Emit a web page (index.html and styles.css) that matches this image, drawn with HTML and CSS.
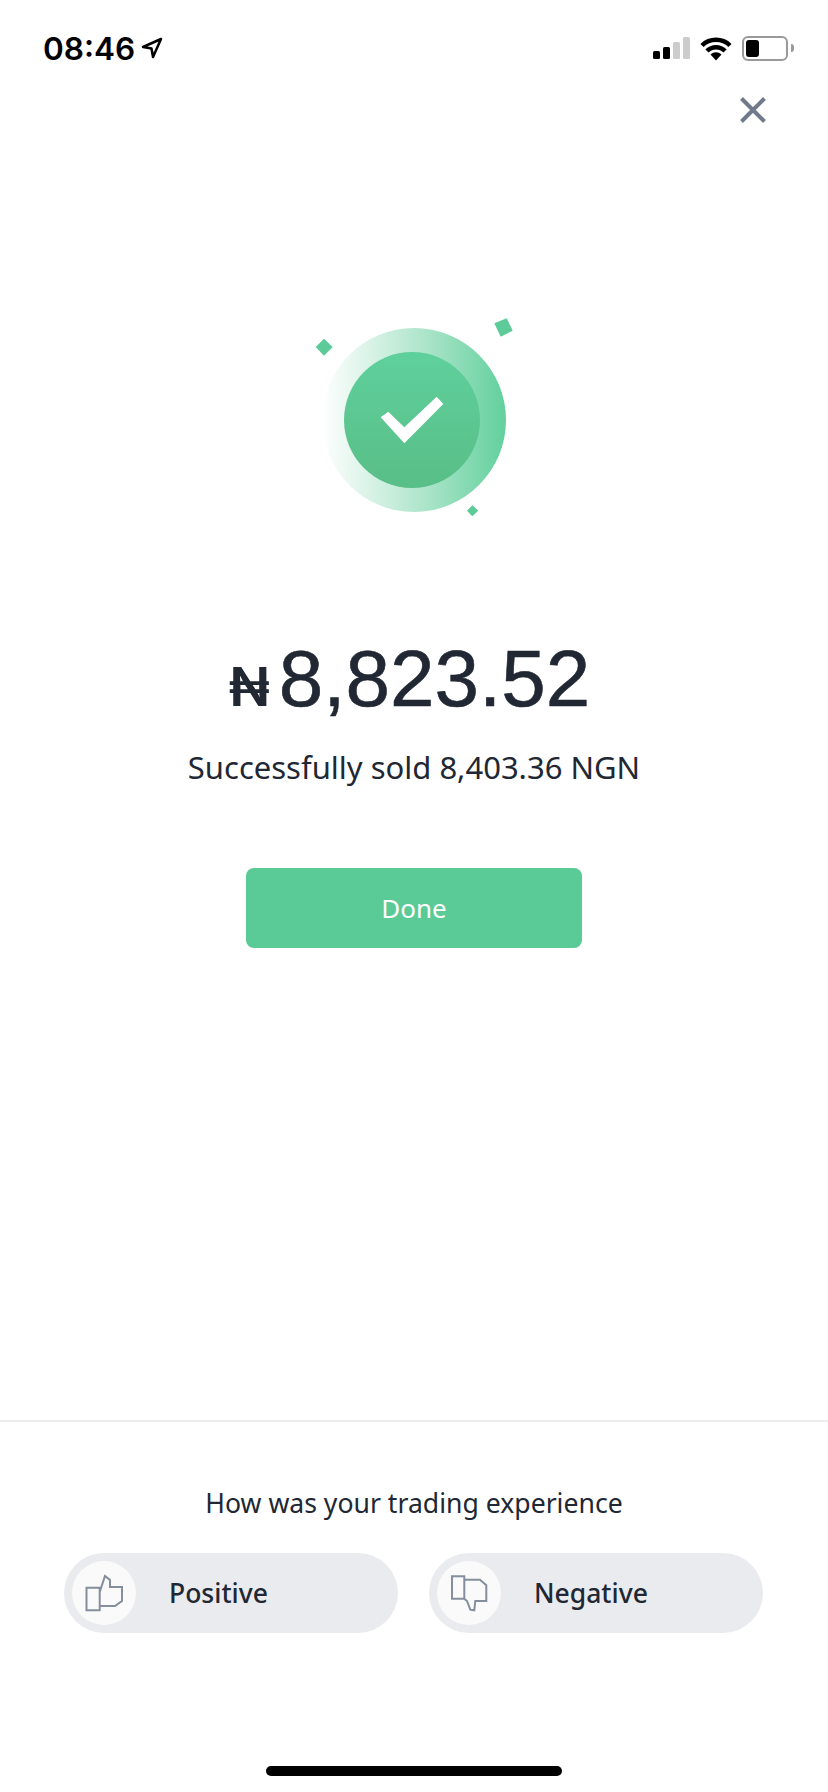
FILE: index.html
```html
<!DOCTYPE html>
<html>
<head>
  <title>Order result</title>
  <link rel="stylesheet" href="styles.css">
</head>
<body>
  <div class="page">

    <div class="status-bar">
      <div class="status-left">
        <span class="clock">08:46</span>
        <svg class="location" width="22" height="22" viewBox="0 0 22 22">
          <path d="M20 2 2 10l8.500 1.500L12 20z" fill="none" stroke="#000" stroke-width="2.500" stroke-linejoin="round"/>
        </svg>
      </div>
      <div class="status-right">
        <svg width="37" height="24" viewBox="0 0 37 24">
          <rect x="0" y="15" width="7" height="8" rx="1.5" fill="#000"/>
          <rect x="10" y="11" width="7" height="12" rx="1.5" fill="#000"/>
          <rect x="20" y="6" width="7" height="17" rx="1.5" fill="#ccc"/>
          <rect x="30" y="1" width="7" height="22" rx="1.5" fill="#ccc"/>
        </svg>
        <svg width="32" height="25" viewBox="0 0 32 25">
          <path d="M2 9.500a20 20 0 0 1 28 0M7 15a12.500 12.500 0 0 1 18 0" fill="none" stroke="#000" stroke-width="4.500"/>
          <path d="M10.500 18.500a8 8 0 0 1 11 0L16 24.500z" fill="#000"/>
        </svg>
        <div class="battery">
          <div class="battery-level"></div>
        </div>
        <div class="battery-tip"></div>
      </div>
    </div>

    <div class="close-row">
      <svg width="28" height="28" viewBox="0 0 28 28">
        <path d="M2.500 2.500l23 23M25.500 2.500l-23 23" stroke="#707a8a" stroke-width="4" fill="none"/>
      </svg>
    </div>

    <div class="result">
      <svg class="result-icon" width="210" height="210" viewBox="0 0 210 210">
        <defs>
          <linearGradient id="ring" x1="0" y1="0" x2="1" y2="0">
            <stop offset="0" stop-color="#fff"/>
            <stop offset="0.55" stop-color="#aee5cb"/>
            <stop offset="1" stop-color="#62d09d"/>
          </linearGradient>
          <linearGradient id="disc" x1="0" y1="0" x2="0" y2="1">
            <stop offset="0" stop-color="#5fd09c"/>
            <stop offset="1" stop-color="#59be87"/>
          </linearGradient>
        </defs>
        <circle cx="104" cy="105" r="92" fill="url(#ring)"/>
        <circle cx="102" cy="105" r="68" fill="url(#disc)"/>
        <path d="M70.700 102.300l7.600-5.600 16 15.600 32.400-30.600 6.600 7.300-39 39.300z" fill="#fff"/>
        <path d="M184.300 8.300l12.400-5 6 12.400-12 6z" fill="#5ccb97"/>
        <path d="M5.700 32l8.300-8.300 8.700 8.300-8.700 8.700z" fill="#5ccb97"/>
        <path d="M157 195.700l5.300-5.400 6 5.400-6 5.600z" fill="#5ccb97"/>
      </svg>

      <div class="amount">
        <span class="currency">₦</span><span class="value">8,823.52</span>
      </div>
      <p class="sub-text">Successfully sold 8,403.36 NGN</p>
      <button class="done-button">Done</button>
    </div>

    <div class="feedback">
      <p class="feedback-title">How was your trading experience</p>
      <div class="feedback-buttons">
        <button class="feedback-button">
          <span class="feedback-icon">
            <svg width="64" height="64" viewBox="0 0 64 64">
              <path d="M14.500 26.700h13.200v22.600H14.500zM27.700 31 33 15l5 4v7h12v14l-7 5H27.700" fill="none" stroke="#848e9c" stroke-width="2"/>
            </svg>
          </span>
          <span class="feedback-label">Positive</span>
        </button>
        <button class="feedback-button">
          <span class="feedback-icon">
            <svg width="64" height="64" viewBox="0 0 64 64">
              <path d="M15 15.300h12.300v22.400H15zM27.300 18.700H43l6.300 5.600V40h-11l-1 9.300-4-.6L30 40l-2.700-2.300" fill="none" stroke="#848e9c" stroke-width="2"/>
            </svg>
          </span>
          <span class="feedback-label">Negative</span>
        </button>
      </div>
      <div class="home-bar"></div>
    </div>
  </div>
</body>
</html>
```

FILE: styles.css
```css
body {
  margin: 0;
  padding: 0;
  background-color: #fff;
  color: #212733;
  font-family: "Noto Sans", Arial, sans-serif;
}

.page {
  width: 828px;
  height: 1792px;
  display: flex;
  flex-direction: column;
  overflow: hidden;
}

.status-bar {
  height: 96px;
  flex: none;
  box-sizing: border-box;
  padding: 0 34px 0 43px;
  display: flex;
  justify-content: space-between;
  align-items: center;
}

.status-left {
  display: flex;
  align-items: center;
  gap: 6px;
}

.clock {
  font-family: Inter, sans-serif;
  font-size: 31.5px;
  font-weight: 600;
  color: #000;
}

.status-right {
  display: flex;
  align-items: center;
}

.status-right svg {
  margin-right: 10px;
}

.battery {
  width: 46px;
  height: 25px;
  box-sizing: border-box;
  border: 2px solid #999;
  border-radius: 6px;
  padding: 2px;
}

.battery-level {
  width: 13px;
  height: 17px;
  background-color: #000;
  border-radius: 3px;
}

.battery-tip {
  width: 3px;
  height: 8px;
  margin-left: 3px;
  background-color: #999;
  border-radius: 0 3px 3px 0;
}

.close-row {
  flex: none;
  height: 28px;
  display: flex;
  justify-content: flex-end;
  padding-right: 61px;
}

.result {
  flex: 1;
  display: flex;
  flex-direction: column;
  align-items: center;
}

.result-icon {
  margin: 191px 0 0 2px;
}

.amount {
  margin: 104px 0 0 -9px;
  height: 100px;
  display: flex;
  align-items: baseline;
  justify-content: center;
}

.currency {
  font-family: Inter, sans-serif;
  font-size: 54px;
  font-weight: 600;
  margin-right: 9px;
}

.value {
  font-family: "Liberation Sans", Arial, sans-serif;
  font-size: 80px;
  line-height: 100px;
  -webkit-text-stroke: 0.6px #212733;
}

.sub-text {
  margin: 16px 0 0;
  font-size: 31px;
  line-height: 44px;
}

.done-button {
  width: 336px;
  height: 80px;
  margin-top: 79px;
  background-color: #5aca96;
  color: #fff;
  border: none;
  border-radius: 8px;
  font-family: "Noto Sans", Arial, sans-serif;
  font-size: 26px;
  font-weight: 400;
}

.feedback {
  flex: none;
  height: 372px;
  box-sizing: border-box;
  border-top: 2px solid #eaecef;
  padding-top: 61px;
}

.feedback-title {
  margin: 0;
  text-align: center;
  font-size: 26.6px;
  line-height: 40px;
}

.feedback-buttons {
  display: flex;
  gap: 31px;
  margin-top: 30px;
  padding-left: 64px;
}

.feedback-button {
  width: 334px;
  height: 80px;
  display: flex;
  align-items: center;
  padding: 0 0 0 8px;
  background-color: #e9ebef;
  border: none;
  border-radius: 40px;
  color: #212733;
  font-family: "Noto Sans", Arial, sans-serif;
  font-size: 26.500px;
  font-weight: 500;
}

.feedback-icon {
  width: 64px;
  height: 64px;
  border-radius: 50%;
  background-color: #fafafa;
  display: block;
}

.feedback-label {
  margin-left: 33px;
}

.home-bar {
  width: 296px;
  height: 10px;
  margin: 133px auto 0;
  background-color: #000;
  border-radius: 5px;
}
```
